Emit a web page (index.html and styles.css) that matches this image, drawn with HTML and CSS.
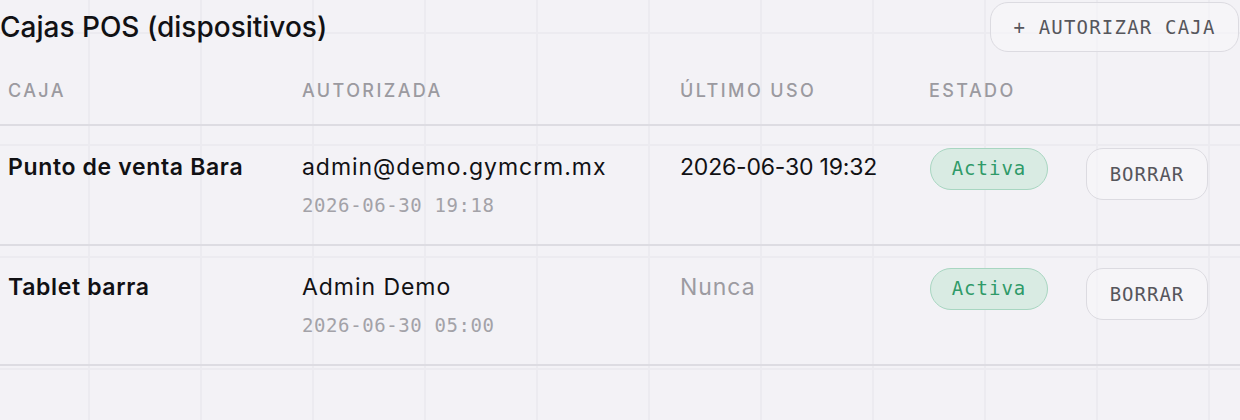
FILE: index.html
```html
<!DOCTYPE html>
<html lang="es">
<head>
<meta charset="utf-8">
<title>Cajas POS</title>
<link rel="stylesheet" href="styles.css">
</head>
<body>
<div class="page">
  <div class="topbar">
    <h1 class="title">Cajas POS (dispositivos)</h1>
    <button class="btn btn-add">+ AUTORIZAR CAJA</button>
  </div>
  <div class="table">
    <div class="row head">
      <div class="cell">CAJA</div>
      <div class="cell">AUTORIZADA</div>
      <div class="cell">ÚLTIMO USO</div>
      <div class="cell">ESTADO</div>
      <div class="cell"></div>
    </div>
    <div class="row">
      <div class="cell"><div class="name">Punto de venta Bara</div></div>
      <div class="cell"><div class="main">admin@demo.gymcrm.mx</div><div class="sub">2026-06-30 19:18</div></div>
      <div class="cell"><div class="main date">2026-06-30 19:32</div></div>
      <div class="cell"><span class="badge">Activa</span></div>
      <div class="cell"><button class="btn btn-del">BORRAR</button></div>
    </div>
    <div class="row">
      <div class="cell"><div class="name">Tablet barra</div></div>
      <div class="cell"><div class="main">Admin Demo</div><div class="sub">2026-06-30 05:00</div></div>
      <div class="cell"><div class="main muted">Nunca</div></div>
      <div class="cell"><span class="badge">Activa</span></div>
      <div class="cell"><button class="btn btn-del">BORRAR</button></div>
    </div>
  </div>
</div>
</body>
</html>
```
FILE: styles.css
```css
html, body {
  margin: 0;
  padding: 0;
}
body {
  background-color: #f3f2f6;
  background-image:
    linear-gradient(to right, #ecebf0 2px, transparent 2px),
    linear-gradient(to bottom, #ecebf0 2px, transparent 2px);
  background-size: 112px 112px;
  background-position: 88px 32px;
  font-family: Inter, "Noto Sans", sans-serif;
  color: #111114;
  width: 1240px;
  height: 420px;
  overflow: hidden;
}
.page {
  width: 1240px;
}
.topbar {
  display: flex;
  justify-content: space-between;
  align-items: center;
  height: 52px;
}
.title {
  margin: 0;
  font-size: 28px;
  font-weight: 500;
  letter-spacing: 0;
  line-height: 52px;
  padding-top: 2px;
}
.btn {
  font-family: "DejaVu Sans Mono", monospace;
  font-size: 19px;
  letter-spacing: 1.2px;
  color: #56565c;
  background: rgba(248, 247, 250, 0.6);
  border: 1.5px solid #dcdbe1;
  cursor: pointer;
}
.btn-add {
  width: 249px;
  height: 50px;
  border-radius: 18px;
  margin-right: 1px;
  margin-top: 1px;
  padding: 0;
}
.btn-del {
  width: 122px;
  height: 52px;
  border-radius: 17px;
  padding: 0;
  letter-spacing: 1px;
}
.table {
  display: flex;
  flex-direction: column;
}
.row {
  display: grid;
  grid-template-columns: 294px 378px 249px 157px 162px;
  border-bottom: 2px solid #dddce2;
  height: 118px;
}
.row.head {
  height: 72px;
}
.cell {
  padding: 22px 8px 0 8px;
}
.head .cell {
  padding-top: 27px;
  font-size: 18px;
  font-weight: 500;
  line-height: 24px;
  letter-spacing: 2.4px;
  color: #9b9aa0;
}
.name {
  font-size: 23px;
  font-weight: 600;
  line-height: 38px;
  letter-spacing: 0.65px;
}
.main {
  font-size: 23px;
  font-weight: 400;
  line-height: 38px;
  letter-spacing: 0.95px;
}
.main.date {
  letter-spacing: -0.2px;
}
.muted {
  color: #9c9ba1;
}
.sub {
  margin-top: 6px;
  font-family: "DejaVu Sans Mono", monospace;
  font-size: 19px;
  line-height: 26px;
  letter-spacing: 0.6px;
  color: #a3a2a8;
}
.badge {
  display: inline-block;
  box-sizing: border-box;
  margin-left: 1px;
  width: 118px;
  height: 42px;
  line-height: 39px;
  text-align: center;
  border-radius: 21px;
  border: 1.5px solid #a8d6c1;
  background: #d9ebe3;
  color: #2f9a68;
  font-family: "DejaVu Sans Mono", monospace;
  font-size: 19px;
  letter-spacing: 1px;
}
```
